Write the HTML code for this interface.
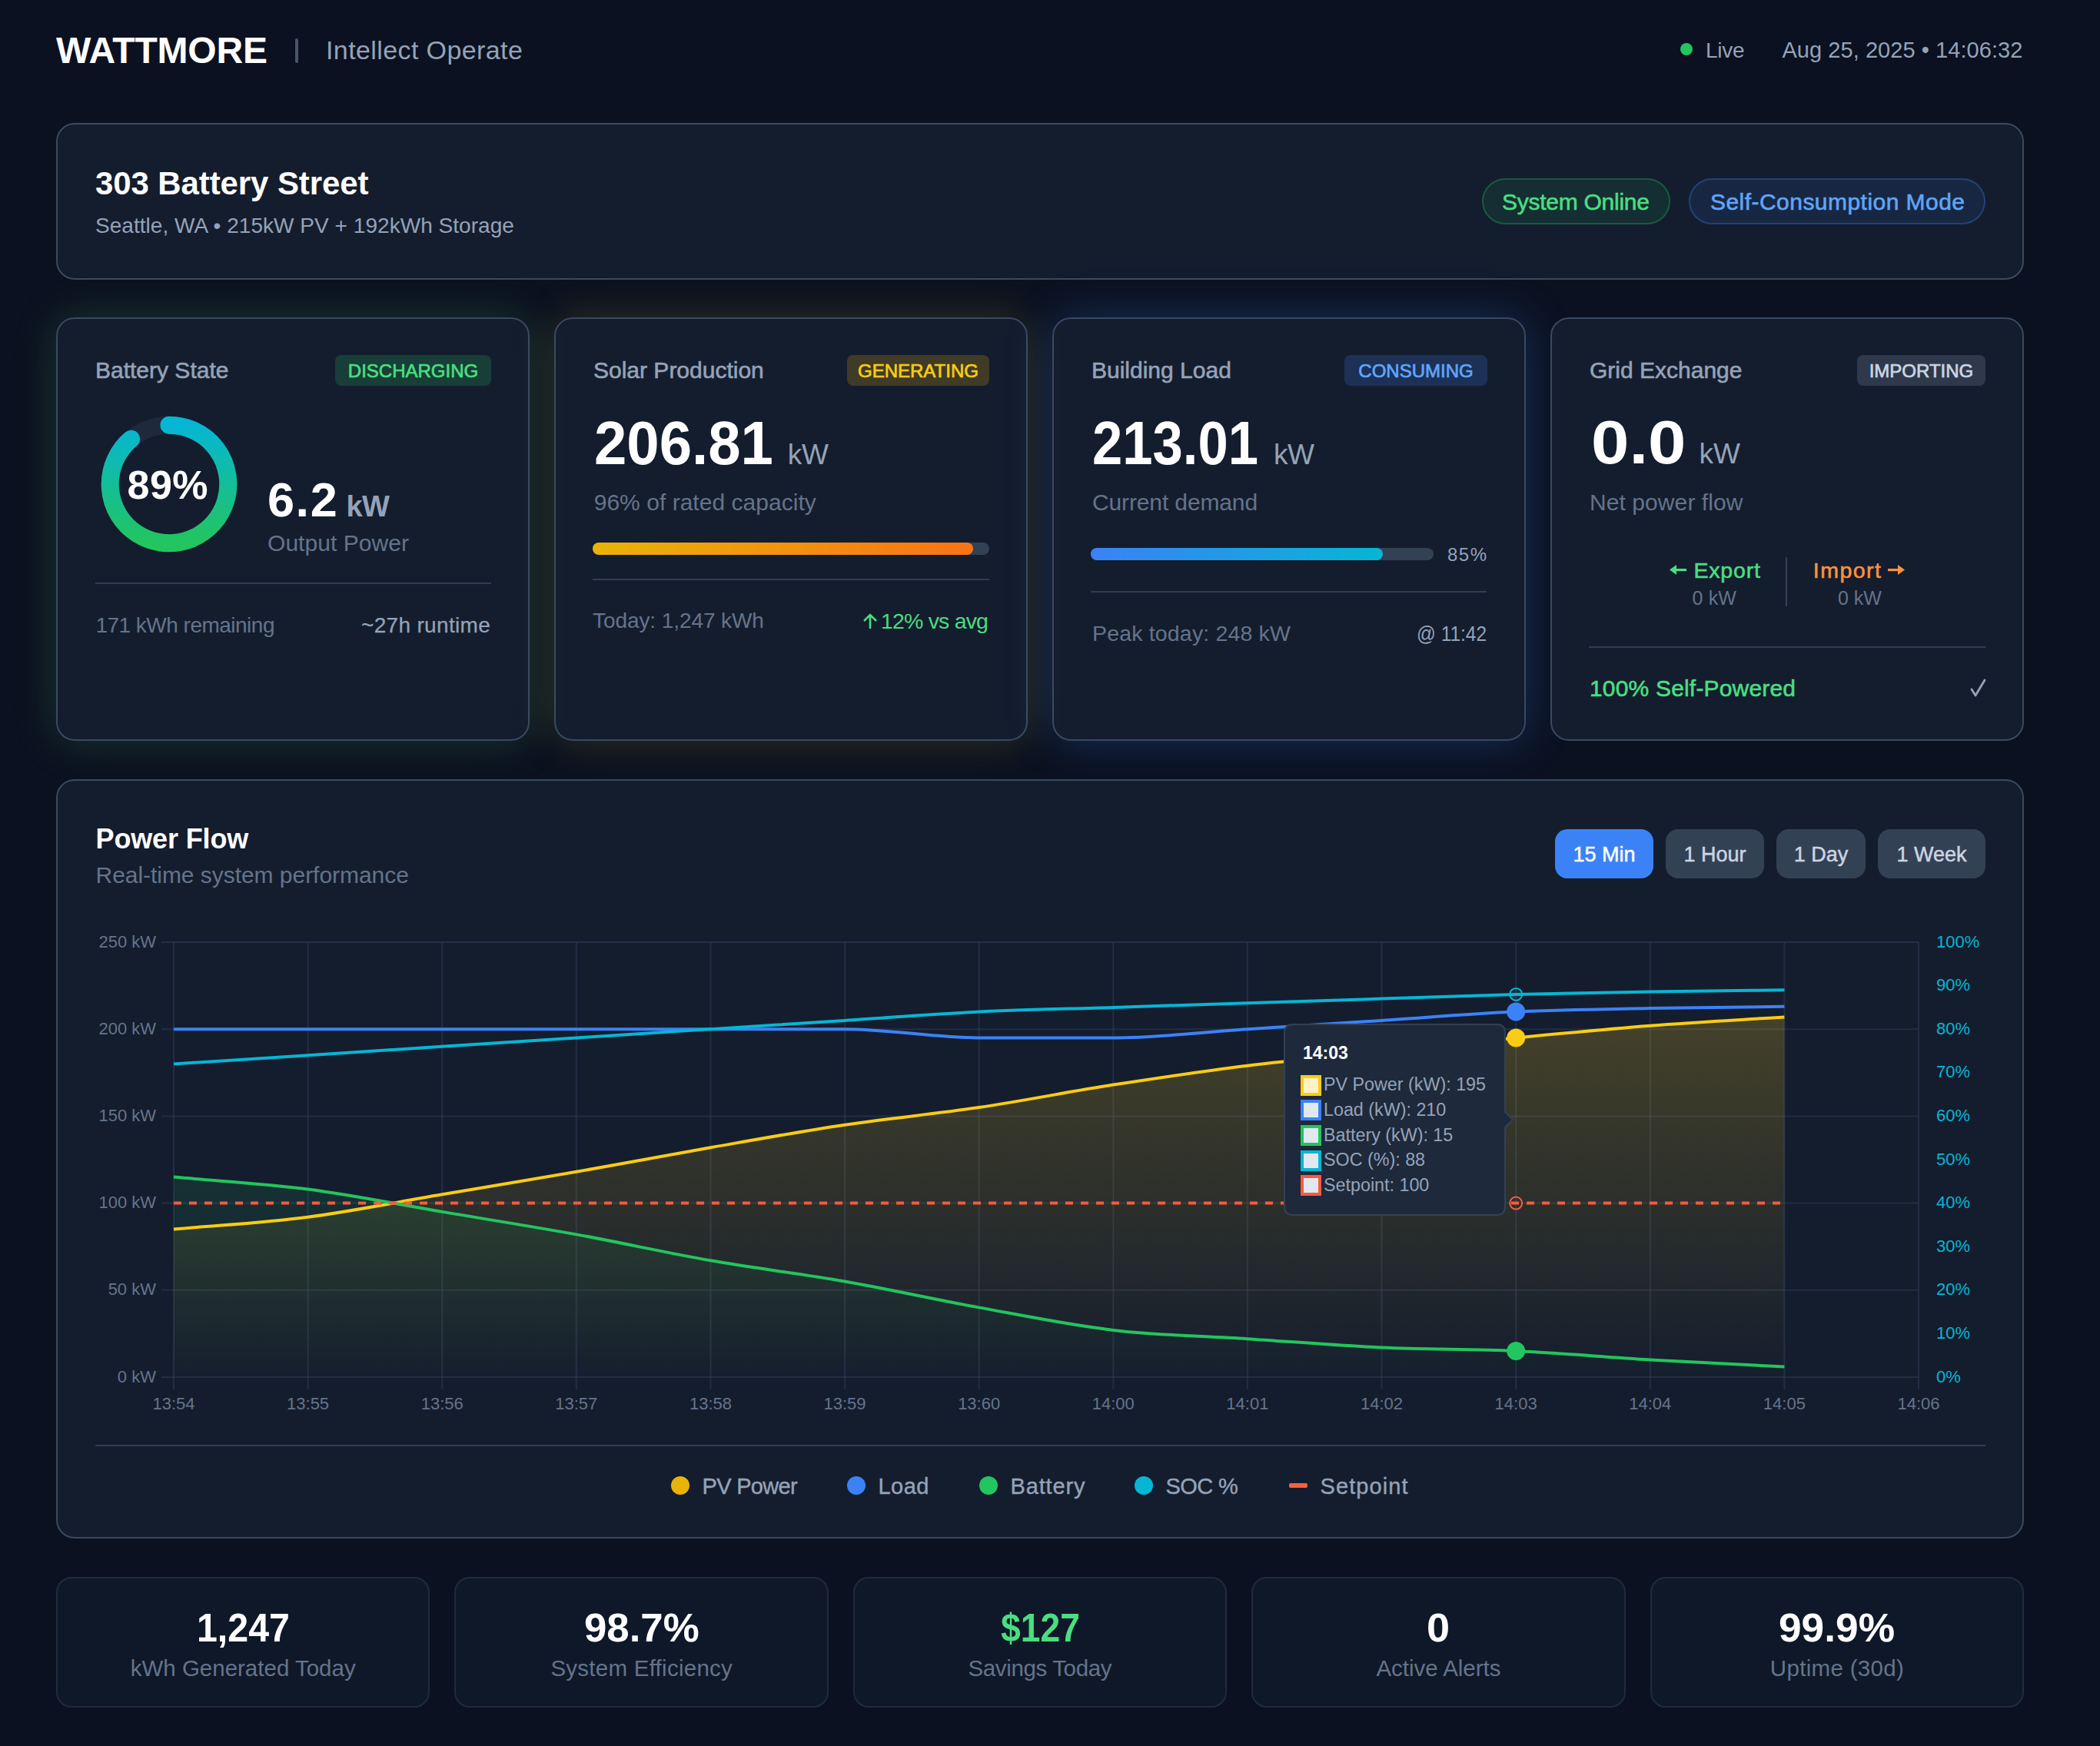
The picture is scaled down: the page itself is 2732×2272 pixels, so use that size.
<!DOCTYPE html>
<html><head><meta charset="utf-8"><title>Wattmore</title>
<style>
html,body{margin:0;padding:0;}
body{width:2732px;height:2272px;overflow:hidden;position:relative;background:#0b1120;font-family:"Liberation Sans",sans-serif;}
.t{position:absolute;white-space:nowrap;}
.b{position:absolute;}
</style></head><body>
<div class="t" style="left:73.00px;top:41.77px;font-size:48px;line-height:48px;color:#ffffff;font-weight:700;letter-spacing:-0.21px;">WATTMORE</div>
<div class="b" style="left:384px;top:50px;width:4px;height:32px;background:#475569;border-radius:2px"></div>
<div class="t" style="left:424.00px;top:48.22px;font-size:34px;line-height:34px;color:#94a3b8;letter-spacing:0.40px;">Intellect Operate</div>
<div class="b" style="left:2186px;top:56px;width:16px;height:16px;background:#22c55e;border-radius:50%"></div>
<div class="t" style="left:2219.00px;top:51.50px;font-size:28px;line-height:28px;color:#94a3b8;letter-spacing:-0.29px;">Live</div>
<div class="t" style="left:2318.40px;top:50.65px;font-size:29px;line-height:29px;color:#94a3b8;letter-spacing:0.06px;">Aug 25, 2025 • 14:06:32</div>
<div class="b" style="left:73px;top:160px;width:2560px;height:204px;background:rgba(30,41,59,0.5);border:2px solid #3a4960;border-radius:24px;box-sizing:border-box"></div>
<div class="t" style="left:124.00px;top:218.45px;font-size:42px;line-height:42px;color:#ffffff;font-weight:700;letter-spacing:-0.10px;">303 Battery Street</div>
<div class="t" style="left:124.00px;top:280.30px;font-size:28px;line-height:28px;color:#94a3b8;letter-spacing:0.04px;">Seattle, WA • 215kW PV + 192kWh Storage</div>
<div class="b" style="left:1928px;top:232px;width:245px;height:60px;background:rgba(34,197,94,0.1);border:2px solid rgba(34,197,94,0.3);border-radius:30px;box-sizing:border-box"></div>
<div class="t" style="left:1954.00px;top:247.80px;font-size:30px;line-height:30px;color:#4ade80;letter-spacing:-0.26px;-webkit-text-stroke:0.6px #4ade80;">System Online</div>
<div class="b" style="left:2197px;top:232px;width:386px;height:60px;background:rgba(59,130,246,0.1);border:2px solid rgba(59,130,246,0.3);border-radius:30px;box-sizing:border-box"></div>
<div class="t" style="left:2225.00px;top:247.80px;font-size:30px;line-height:30px;color:#60a5fa;letter-spacing:0.46px;-webkit-text-stroke:0.6px #60a5fa;">Self-Consumption Mode</div>
<div class="b" style="left:73px;top:413px;width:616px;height:551px;background:rgba(30,41,59,0.5);border:2px solid #3a4960;border-radius:24px;box-sizing:border-box;box-shadow:0 0 56px rgba(80,190,110,0.22)"></div>
<div class="b" style="left:721px;top:413px;width:616px;height:551px;background:rgba(30,41,59,0.5);border:2px solid #3a4960;border-radius:24px;box-sizing:border-box;box-shadow:0 0 56px rgba(200,185,50,0.2)"></div>
<div class="b" style="left:1369px;top:413px;width:616px;height:551px;background:rgba(30,41,59,0.5);border:2px solid #3a4960;border-radius:24px;box-sizing:border-box;box-shadow:0 0 60px rgba(59,130,246,0.26)"></div>
<div class="b" style="left:2017px;top:413px;width:616px;height:551px;background:rgba(30,41,59,0.5);border:2px solid #3a4960;border-radius:24px;box-sizing:border-box;box-shadow:none"></div>
<div class="t" style="left:124.00px;top:467.11px;font-size:30px;line-height:30px;color:#94a3b8;-webkit-text-stroke:0.6px #94a3b8;">Battery State</div>
<div class="b" style="left:436px;top:462px;width:203px;height:40px;background:rgba(34,197,94,0.2);border-radius:8px"></div>
<div class="t" style="left:452.84px;top:471.08px;font-size:24px;line-height:24px;color:#4ade80;-webkit-text-stroke:0.7px #4ade80;">DISCHARGING</div>
<div class="t" style="left:772.00px;top:467.11px;font-size:30px;line-height:30px;color:#94a3b8;-webkit-text-stroke:0.6px #94a3b8;">Solar Production</div>
<div class="b" style="left:1102px;top:462px;width:185px;height:40px;background:rgba(234,179,8,0.2);border-radius:8px"></div>
<div class="t" style="left:1116.02px;top:471.08px;font-size:24px;line-height:24px;color:#facc15;-webkit-text-stroke:0.7px #facc15;">GENERATING</div>
<div class="t" style="left:1420.00px;top:467.11px;font-size:30px;line-height:30px;color:#94a3b8;-webkit-text-stroke:0.6px #94a3b8;">Building Load</div>
<div class="b" style="left:1749px;top:462px;width:186px;height:40px;background:rgba(59,130,246,0.2);border-radius:8px"></div>
<div class="t" style="left:1767.36px;top:471.08px;font-size:24px;line-height:24px;color:#60a5fa;-webkit-text-stroke:0.7px #60a5fa;">CONSUMING</div>
<div class="t" style="left:2068.00px;top:467.11px;font-size:30px;line-height:30px;color:#94a3b8;-webkit-text-stroke:0.6px #94a3b8;">Grid Exchange</div>
<div class="b" style="left:2416px;top:462px;width:167px;height:40px;background:rgba(71,85,105,0.5);border-radius:8px"></div>
<div class="t" style="left:2431.70px;top:471.08px;font-size:24px;line-height:24px;color:#cbd5e1;-webkit-text-stroke:0.7px #cbd5e1;">IMPORTING</div>
<svg class="b" style="left:124px;top:534px" width="192" height="192" viewBox="0 0 100 100">
<defs><linearGradient id="dg" x1="0" y1="0" x2="0" y2="1"><stop offset="0" stop-color="#06b6d4"/><stop offset="1" stop-color="#22c55e"/></linearGradient></defs>
<circle cx="50" cy="50" r="40" fill="none" stroke="#1e293b" stroke-width="12"/>
<path d="M50,10 A40,40 0 1 1 24.29,19.36" fill="none" stroke="url(#dg)" stroke-width="12" stroke-linecap="round"/>
</svg>
<div class="t" style="left:165.50px;top:604.98px;font-size:52px;line-height:52px;color:#ffffff;font-weight:700;letter-spacing:0.50px;">89%</div>
<div class="t" style="left:348.00px;top:618.67px;font-size:63px;line-height:63px;color:#ffffff;font-weight:700;letter-spacing:1.56px;">6.2</div>
<div class="t" style="left:450.50px;top:639.83px;font-size:38px;line-height:38px;color:#94a3b8;font-weight:700;letter-spacing:-0.70px;">kW</div>
<div class="t" style="left:348.00px;top:691.61px;font-size:30px;line-height:30px;color:#64748b;letter-spacing:0.05px;">Output Power</div>
<div class="b" style="left:124px;top:758px;width:515px;height:2px;background:rgba(51,65,85,0.9)"></div>
<div class="t" style="left:124.40px;top:799.60px;font-size:28px;line-height:28px;color:#64748b;letter-spacing:-0.51px;">171 kWh remaining</div>
<div class="t" style="left:470.00px;top:799.60px;font-size:28px;line-height:28px;color:#94a3b8;letter-spacing:0.32px;-webkit-text-stroke:0.25px #94a3b8;">~27h runtime</div>
<div class="t" style="left:772.70px;top:536.73px;font-size:79px;line-height:79px;color:#ffffff;font-weight:700;transform:scaleX(0.9638);transform-origin:0.00px 0;">206.81</div>
<div class="t" style="left:1024.70px;top:572.68px;font-size:37px;line-height:37px;color:#94a3b8;letter-spacing:-0.16px;">kW</div>
<div class="t" style="left:772.70px;top:638.61px;font-size:30px;line-height:30px;color:#64748b;letter-spacing:0.03px;">96% of rated capacity</div>
<div class="b" style="left:771px;top:705.5px;width:515.5px;height:16.0px;background:#334155;border-radius:8px"></div>
<div class="b" style="left:771px;top:705.5px;width:495px;height:16.0px;background:linear-gradient(90deg,#eab308,#f97316);border-radius:8px"></div>
<div class="b" style="left:771px;top:753px;width:515.5px;height:2px;background:rgba(51,65,85,0.9)"></div>
<div class="t" style="left:771.00px;top:794.30px;font-size:28px;line-height:28px;color:#64748b;letter-spacing:-0.08px;">Today: 1,247 kWh</div>
<div class="t" style="left:1146.00px;top:793.87px;font-size:28.5px;line-height:28.5px;color:#4ade80;letter-spacing:-0.82px;">12% vs avg</div>
<svg class="b" style="left:1120px;top:796px" width="24" height="26"><path d="M12,4 V22 M4,12 L12,4 L20,12" fill="none" stroke="#4ade80" stroke-width="2.6" stroke-linejoin="miter"/></svg>
<div class="t" style="left:1421.00px;top:536.73px;font-size:79px;line-height:79px;color:#ffffff;font-weight:700;transform:scaleX(0.8935);transform-origin:0.00px 0;">213.01</div>
<div class="t" style="left:1657.00px;top:572.68px;font-size:37px;line-height:37px;color:#94a3b8;letter-spacing:-0.46px;">kW</div>
<div class="t" style="left:1421.00px;top:638.61px;font-size:30px;line-height:30px;color:#64748b;letter-spacing:-0.13px;">Current demand</div>
<div class="b" style="left:1419px;top:712.7px;width:446px;height:16.0px;background:#334155;border-radius:8px"></div>
<div class="b" style="left:1419px;top:712.7px;width:380px;height:16.0px;background:linear-gradient(90deg,#3b82f6,#06b6d4);border-radius:8px"></div>
<div class="t" style="left:1883.00px;top:710.18px;font-size:24px;line-height:24px;color:#94a3b8;letter-spacing:1.50px;">85%</div>
<div class="b" style="left:1419px;top:768.5px;width:515px;height:2.0px;background:rgba(51,65,85,0.9)"></div>
<div class="t" style="left:1421.00px;top:809.87px;font-size:28.5px;line-height:28.5px;color:#64748b;letter-spacing:0.17px;">Peak today: 248 kW</div>
<div class="t" style="left:1843.00px;top:809.87px;font-size:28.5px;line-height:28.5px;color:#94a3b8;transform:scaleX(0.8583);transform-origin:0.00px 0;">@ 11:42</div>
<div class="t" style="left:2069.60px;top:536.43px;font-size:79px;line-height:79px;color:#ffffff;font-weight:700;transform:scaleX(1.1238);transform-origin:0.00px 0;">0.0</div>
<div class="t" style="left:2210.60px;top:571.68px;font-size:37px;line-height:37px;color:#94a3b8;letter-spacing:-0.06px;">kW</div>
<div class="t" style="left:2068.00px;top:639.31px;font-size:30px;line-height:30px;color:#64748b;letter-spacing:0.08px;">Net power flow</div>
<div class="t" style="left:2203.40px;top:727.67px;font-size:28.5px;line-height:28.5px;color:#4ade80;letter-spacing:0.85px;-webkit-text-stroke:0.6px #4ade80;">Export</div>
<svg class="b" style="left:2168px;top:731px" width="30" height="22"><path d="M4,10.5 L13,4 L13,17 Z" fill="#4ade80"/><rect x="11" y="9" width="15" height="3.2" fill="#4ade80"/></svg>
<div class="t" style="left:2201.60px;top:765.64px;font-size:25px;line-height:25px;color:#64748b;letter-spacing:0.13px;">0 kW</div>
<div class="b" style="left:2323px;top:725px;width:2px;height:64px;background:#334155"></div>
<div class="t" style="left:2358.80px;top:727.67px;font-size:28.5px;line-height:28.5px;color:#fb923c;letter-spacing:1.48px;-webkit-text-stroke:0.6px #fb923c;">Import</div>
<svg class="b" style="left:2452px;top:731px" width="30" height="22"><path d="M26,10.5 L17,4 L17,17 Z" fill="#fb923c"/><rect x="4" y="9" width="15" height="3.2" fill="#fb923c"/></svg>
<div class="t" style="left:2391.00px;top:765.64px;font-size:25px;line-height:25px;color:#64748b;">0 kW</div>
<div class="b" style="left:2067px;top:840.5px;width:516px;height:2.0px;background:rgba(51,65,85,0.9)"></div>
<div class="t" style="left:2068.00px;top:880.61px;font-size:30px;line-height:30px;color:#4ade80;letter-spacing:0.18px;-webkit-text-stroke:0.6px #4ade80;">100% Self-Powered</div>
<svg class="b" style="left:2560px;top:880px" width="26" height="30"><path d="M5,17 L10,25 L22,5" fill="none" stroke="#94a3b8" stroke-width="2.8" stroke-linecap="round" stroke-linejoin="round"/></svg>
<div class="b" style="left:73px;top:1014px;width:2560px;height:988px;background:rgba(30,41,59,0.5);border:2px solid #3a4960;border-radius:24px;box-sizing:border-box"></div>
<div class="t" style="left:124.50px;top:1074.33px;font-size:36px;line-height:36px;color:#ffffff;font-weight:700;letter-spacing:-0.13px;">Power Flow</div>
<div class="t" style="left:124.50px;top:1124.01px;font-size:30px;line-height:30px;color:#64748b;letter-spacing:-0.04px;">Real-time system performance</div>
<div class="b" style="left:2023px;top:1079px;width:128px;height:64px;background:#3b82f6;border-radius:16px"></div>
<div class="t" style="left:2046.50px;top:1099.14px;font-size:27px;line-height:27px;color:#ffffff;-webkit-text-stroke:0.5px #ffffff;">15 Min</div>
<div class="b" style="left:2167px;top:1079px;width:128px;height:64px;background:#334155;border-radius:16px"></div>
<div class="t" style="left:2190.50px;top:1099.14px;font-size:27px;line-height:27px;color:#cbd5e1;-webkit-text-stroke:0.5px #cbd5e1;">1 Hour</div>
<div class="b" style="left:2311px;top:1079px;width:116px;height:64px;background:#334155;border-radius:16px"></div>
<div class="t" style="left:2333.76px;top:1099.14px;font-size:27px;line-height:27px;color:#cbd5e1;-webkit-text-stroke:0.5px #cbd5e1;">1 Day</div>
<div class="b" style="left:2443px;top:1079px;width:140px;height:64px;background:#334155;border-radius:16px"></div>
<div class="t" style="left:2467.44px;top:1099.14px;font-size:27px;line-height:27px;color:#cbd5e1;-webkit-text-stroke:0.5px #cbd5e1;">1 Week</div>
<svg class="b" style="left:0;top:0" width="2732" height="2272" viewBox="0 0 2732 2272">
<defs><linearGradient id="gy" gradientUnits="userSpaceOnUse" x1="0" y1="1226" x2="0" y2="1800"><stop offset="0" stop-color="rgba(250,204,21,0.25)"/><stop offset="1" stop-color="rgba(250,204,21,0)"/></linearGradient>
<linearGradient id="gg" gradientUnits="userSpaceOnUse" x1="0" y1="1226" x2="0" y2="1800"><stop offset="0" stop-color="rgba(34,197,94,0.25)"/><stop offset="1" stop-color="rgba(34,197,94,0)"/></linearGradient></defs>
<line x1="210" y1="1792.0" x2="2496" y2="1792.0" stroke="rgba(51,65,95,0.48)" stroke-width="2"/>
<line x1="210" y1="1678.8" x2="2496" y2="1678.8" stroke="rgba(51,65,95,0.48)" stroke-width="2"/>
<line x1="210" y1="1565.6" x2="2496" y2="1565.6" stroke="rgba(51,65,95,0.48)" stroke-width="2"/>
<line x1="210" y1="1452.4" x2="2496" y2="1452.4" stroke="rgba(51,65,95,0.48)" stroke-width="2"/>
<line x1="210" y1="1339.2" x2="2496" y2="1339.2" stroke="rgba(51,65,95,0.48)" stroke-width="2"/>
<line x1="210" y1="1226.0" x2="2496" y2="1226.0" stroke="rgba(51,65,95,0.48)" stroke-width="2"/>
<line x1="226.0" y1="1226" x2="226.0" y2="1808" stroke="rgba(51,65,95,0.48)" stroke-width="2"/>
<line x1="400.6" y1="1226" x2="400.6" y2="1808" stroke="rgba(51,65,95,0.48)" stroke-width="2"/>
<line x1="575.2" y1="1226" x2="575.2" y2="1808" stroke="rgba(51,65,95,0.48)" stroke-width="2"/>
<line x1="749.8" y1="1226" x2="749.8" y2="1808" stroke="rgba(51,65,95,0.48)" stroke-width="2"/>
<line x1="924.5" y1="1226" x2="924.5" y2="1808" stroke="rgba(51,65,95,0.48)" stroke-width="2"/>
<line x1="1099.1" y1="1226" x2="1099.1" y2="1808" stroke="rgba(51,65,95,0.48)" stroke-width="2"/>
<line x1="1273.7" y1="1226" x2="1273.7" y2="1808" stroke="rgba(51,65,95,0.48)" stroke-width="2"/>
<line x1="1448.3" y1="1226" x2="1448.3" y2="1808" stroke="rgba(51,65,95,0.48)" stroke-width="2"/>
<line x1="1622.9" y1="1226" x2="1622.9" y2="1808" stroke="rgba(51,65,95,0.48)" stroke-width="2"/>
<line x1="1797.5" y1="1226" x2="1797.5" y2="1808" stroke="rgba(51,65,95,0.48)" stroke-width="2"/>
<line x1="1972.2" y1="1226" x2="1972.2" y2="1808" stroke="rgba(51,65,95,0.48)" stroke-width="2"/>
<line x1="2146.8" y1="1226" x2="2146.8" y2="1808" stroke="rgba(51,65,95,0.48)" stroke-width="2"/>
<line x1="2321.4" y1="1226" x2="2321.4" y2="1808" stroke="rgba(51,65,95,0.48)" stroke-width="2"/>
<line x1="2496.0" y1="1226" x2="2496.0" y2="1808" stroke="rgba(51,65,95,0.48)" stroke-width="2"/>
<path d="M226.0,1599.6 C284.2,1594.3 342.4,1591.3 400.6,1583.7 C458.8,1576.2 517.0,1564.1 575.2,1554.3 C633.4,1544.5 691.6,1535.0 749.8,1524.8 C808.1,1514.7 866.3,1503.3 924.5,1493.2 C982.7,1483.0 1040.9,1472.4 1099.1,1463.7 C1157.3,1455.0 1215.5,1449.8 1273.7,1441.1 C1331.9,1432.4 1390.1,1420.7 1448.3,1411.6 C1506.5,1402.6 1564.7,1393.9 1622.9,1386.7 C1681.1,1379.6 1739.3,1374.7 1797.5,1368.6 C1855.7,1362.6 1913.9,1356.2 1972.2,1350.5 C2030.4,1344.9 2088.6,1339.2 2146.8,1334.7 C2205.0,1330.1 2263.2,1327.1 2321.4,1323.4 L2321.4,1792 L226.0,1792 Z" fill="url(#gy)"/>
<path d="M226.0,1531.6 C284.2,1536.9 342.4,1539.9 400.6,1547.5 C458.8,1555.0 517.0,1567.1 575.2,1576.9 C633.4,1586.7 691.6,1595.8 749.8,1606.4 C808.1,1616.9 866.3,1630.1 924.5,1640.3 C982.7,1650.5 1040.9,1657.3 1099.1,1667.5 C1157.3,1677.7 1215.5,1690.9 1273.7,1701.4 C1331.9,1712.0 1390.1,1724.1 1448.3,1730.9 C1506.5,1737.7 1564.7,1738.4 1622.9,1742.2 C1681.1,1746.0 1739.3,1750.9 1797.5,1753.5 C1855.7,1756.2 1913.9,1755.4 1972.2,1758.0 C2030.4,1760.7 2088.6,1766.0 2146.8,1769.4 C2205.0,1772.8 2263.2,1775.4 2321.4,1778.4 L2321.4,1792 L226.0,1792 Z" fill="url(#gg)"/>
<path d="M226.0,1599.6 C284.2,1594.3 342.4,1591.3 400.6,1583.7 C458.8,1576.2 517.0,1564.1 575.2,1554.3 C633.4,1544.5 691.6,1535.0 749.8,1524.8 C808.1,1514.7 866.3,1503.3 924.5,1493.2 C982.7,1483.0 1040.9,1472.4 1099.1,1463.7 C1157.3,1455.0 1215.5,1449.8 1273.7,1441.1 C1331.9,1432.4 1390.1,1420.7 1448.3,1411.6 C1506.5,1402.6 1564.7,1393.9 1622.9,1386.7 C1681.1,1379.6 1739.3,1374.7 1797.5,1368.6 C1855.7,1362.6 1913.9,1356.2 1972.2,1350.5 C2030.4,1344.9 2088.6,1339.2 2146.8,1334.7 C2205.0,1330.1 2263.2,1327.1 2321.4,1323.4" fill="none" stroke="#facc15" stroke-width="4"/>
<path d="M226.0,1339.2 C284.2,1339.2 342.4,1339.2 400.6,1339.2 C458.8,1339.2 517.0,1339.2 575.2,1339.2 C633.4,1339.2 691.6,1339.2 749.8,1339.2 C808.1,1339.2 866.3,1339.2 924.5,1339.2 C982.7,1339.2 1040.9,1339.2 1099.1,1339.2 C1157.3,1339.2 1215.5,1350.5 1273.7,1350.5 C1331.9,1350.5 1390.1,1350.5 1448.3,1350.5 C1506.5,1350.5 1564.7,1343.0 1622.9,1339.2 C1681.1,1335.4 1739.3,1331.7 1797.5,1327.9 C1855.7,1324.1 1913.9,1319.2 1972.2,1316.6 C2030.4,1313.9 2088.6,1313.2 2146.8,1312.0 C2205.0,1310.9 2263.2,1310.5 2321.4,1309.8" fill="none" stroke="#3b82f6" stroke-width="4"/>
<path d="M226.0,1531.6 C284.2,1536.9 342.4,1539.9 400.6,1547.5 C458.8,1555.0 517.0,1567.1 575.2,1576.9 C633.4,1586.7 691.6,1595.8 749.8,1606.4 C808.1,1616.9 866.3,1630.1 924.5,1640.3 C982.7,1650.5 1040.9,1657.3 1099.1,1667.5 C1157.3,1677.7 1215.5,1690.9 1273.7,1701.4 C1331.9,1712.0 1390.1,1724.1 1448.3,1730.9 C1506.5,1737.7 1564.7,1738.4 1622.9,1742.2 C1681.1,1746.0 1739.3,1750.9 1797.5,1753.5 C1855.7,1756.2 1913.9,1755.4 1972.2,1758.0 C2030.4,1760.7 2088.6,1766.0 2146.8,1769.4 C2205.0,1772.8 2263.2,1775.4 2321.4,1778.4" fill="none" stroke="#22c55e" stroke-width="4"/>
<path d="M226.0,1384.5 C284.2,1380.7 342.4,1376.9 400.6,1373.2 C458.8,1369.4 517.0,1365.6 575.2,1361.8 C633.4,1358.1 691.6,1354.3 749.8,1350.5 C808.1,1346.7 866.3,1343.0 924.5,1339.2 C982.7,1335.4 1040.9,1331.7 1099.1,1327.9 C1157.3,1324.1 1215.5,1319.4 1273.7,1316.6 C1331.9,1313.7 1390.1,1312.8 1448.3,1310.9 C1506.5,1309.0 1564.7,1307.1 1622.9,1305.2 C1681.1,1303.4 1739.3,1301.5 1797.5,1299.6 C1855.7,1297.7 1913.9,1295.4 1972.2,1293.9 C2030.4,1292.4 2088.6,1291.5 2146.8,1290.5 C2205.0,1289.6 2263.2,1289.0 2321.4,1288.3" fill="none" stroke="#06b6d4" stroke-width="4"/>
<line x1="226" y1="1565.6" x2="2321.4" y2="1565.6" stroke="#f75a3f" stroke-width="4" stroke-dasharray="10 10"/>
<circle cx="1972.2" cy="1293.9" r="8" fill="rgba(6,182,212,0.1)" stroke="#06b6d4" stroke-width="2"/>
<circle cx="1972.2" cy="1565.6" r="8" fill="none" stroke="#f75a3f" stroke-width="2"/>
<circle cx="1972.2" cy="1350.5" r="12" fill="#facc15"/>
<circle cx="1972.2" cy="1316.6" r="12" fill="#3b82f6"/>
<circle cx="1972.2" cy="1758.0" r="12" fill="#22c55e"/>
<path d="M1682,1333 H1947 Q1958,1333 1958,1344 V1447 L1968,1457 L1958,1467 V1570 Q1958,1581 1947,1581 H1682 Q1671,1581 1671,1570 V1344 Q1671,1333 1682,1333 Z" fill="#1e293b" stroke="#334155" stroke-width="2"/>
</svg>
<div class="t" style="left:152.84px;top:1780.68px;font-size:22px;line-height:22px;color:#64748b;font-family:'Liberation Sans'">0 kW</div>
<div class="t" style="left:140.63px;top:1667.48px;font-size:22px;line-height:22px;color:#64748b;font-family:'Liberation Sans'">50 kW</div>
<div class="t" style="left:128.42px;top:1554.28px;font-size:22px;line-height:22px;color:#64748b;font-family:'Liberation Sans'">100 kW</div>
<div class="t" style="left:128.42px;top:1441.08px;font-size:22px;line-height:22px;color:#64748b;font-family:'Liberation Sans'">150 kW</div>
<div class="t" style="left:128.42px;top:1327.88px;font-size:22px;line-height:22px;color:#64748b;font-family:'Liberation Sans'">200 kW</div>
<div class="t" style="left:128.42px;top:1214.68px;font-size:22px;line-height:22px;color:#64748b;font-family:'Liberation Sans'">250 kW</div>
<div class="t" style="left:2519.00px;top:1780.68px;font-size:22px;line-height:22px;color:#06b6d4;">0%</div>
<div class="t" style="left:2519.00px;top:1724.08px;font-size:22px;line-height:22px;color:#06b6d4;">10%</div>
<div class="t" style="left:2519.00px;top:1667.48px;font-size:22px;line-height:22px;color:#06b6d4;">20%</div>
<div class="t" style="left:2519.00px;top:1610.88px;font-size:22px;line-height:22px;color:#06b6d4;">30%</div>
<div class="t" style="left:2519.00px;top:1554.28px;font-size:22px;line-height:22px;color:#06b6d4;">40%</div>
<div class="t" style="left:2519.00px;top:1497.68px;font-size:22px;line-height:22px;color:#06b6d4;">50%</div>
<div class="t" style="left:2519.00px;top:1441.08px;font-size:22px;line-height:22px;color:#06b6d4;">60%</div>
<div class="t" style="left:2519.00px;top:1384.48px;font-size:22px;line-height:22px;color:#06b6d4;">70%</div>
<div class="t" style="left:2519.00px;top:1327.88px;font-size:22px;line-height:22px;color:#06b6d4;">80%</div>
<div class="t" style="left:2519.00px;top:1271.28px;font-size:22px;line-height:22px;color:#06b6d4;">90%</div>
<div class="t" style="left:2519.00px;top:1214.68px;font-size:22px;line-height:22px;color:#06b6d4;">100%</div>
<div class="t" style="left:198.44px;top:1816.38px;font-size:22px;line-height:22px;color:#64748b;">13:54</div>
<div class="t" style="left:373.06px;top:1816.38px;font-size:22px;line-height:22px;color:#64748b;">13:55</div>
<div class="t" style="left:547.68px;top:1816.38px;font-size:22px;line-height:22px;color:#64748b;">13:56</div>
<div class="t" style="left:722.29px;top:1816.38px;font-size:22px;line-height:22px;color:#64748b;">13:57</div>
<div class="t" style="left:896.91px;top:1816.38px;font-size:22px;line-height:22px;color:#64748b;">13:58</div>
<div class="t" style="left:1071.52px;top:1816.38px;font-size:22px;line-height:22px;color:#64748b;">13:59</div>
<div class="t" style="left:1246.14px;top:1816.38px;font-size:22px;line-height:22px;color:#64748b;">13:60</div>
<div class="t" style="left:1420.75px;top:1816.38px;font-size:22px;line-height:22px;color:#64748b;">14:00</div>
<div class="t" style="left:1595.37px;top:1816.38px;font-size:22px;line-height:22px;color:#64748b;">14:01</div>
<div class="t" style="left:1769.98px;top:1816.38px;font-size:22px;line-height:22px;color:#64748b;">14:02</div>
<div class="t" style="left:1944.60px;top:1816.38px;font-size:22px;line-height:22px;color:#64748b;">14:03</div>
<div class="t" style="left:2119.21px;top:1816.38px;font-size:22px;line-height:22px;color:#64748b;">14:04</div>
<div class="t" style="left:2293.83px;top:1816.38px;font-size:22px;line-height:22px;color:#64748b;">14:05</div>
<div class="t" style="left:2468.45px;top:1816.38px;font-size:22px;line-height:22px;color:#64748b;">14:06</div>
<div class="t" style="left:1695.00px;top:1359.23px;font-size:23px;line-height:23px;color:#ffffff;font-weight:700;">14:03</div>
<div class="b" style="left:1692px;top:1399px;width:27px;height:27px;background:#fef3c7;border:4px solid #facc15;box-sizing:border-box"></div>
<div class="t" style="left:1722.00px;top:1400.28px;font-size:23.3px;line-height:23.3px;color:#94a3b8;">PV Power (kW): 195</div>
<div class="b" style="left:1692px;top:1431px;width:27px;height:27px;background:#e2e8f0;border:4px solid #3b82f6;box-sizing:border-box"></div>
<div class="t" style="left:1722.00px;top:1432.93px;font-size:23.3px;line-height:23.3px;color:#94a3b8;">Load (kW): 210</div>
<div class="b" style="left:1692px;top:1464px;width:27px;height:27px;background:#e2e8f0;border:4px solid #22c55e;box-sizing:border-box"></div>
<div class="t" style="left:1722.00px;top:1465.58px;font-size:23.3px;line-height:23.3px;color:#94a3b8;">Battery (kW): 15</div>
<div class="b" style="left:1692px;top:1497px;width:27px;height:27px;background:#e2e8f0;border:4px solid #06b6d4;box-sizing:border-box"></div>
<div class="t" style="left:1722.00px;top:1498.23px;font-size:23.3px;line-height:23.3px;color:#94a3b8;">SOC (%): 88</div>
<div class="b" style="left:1692px;top:1529px;width:27px;height:27px;background:#e2e8f0;border:4px solid #f75a3f;box-sizing:border-box"></div>
<div class="t" style="left:1722.00px;top:1530.88px;font-size:23.3px;line-height:23.3px;color:#94a3b8;">Setpoint: 100</div>
<div class="b" style="left:124px;top:1880px;width:2459px;height:2px;background:rgba(51,65,85,0.9)"></div>
<div class="b" style="left:873px;top:1921px;width:24px;height:24px;background:#eab308;border-radius:50%"></div>
<div class="t" style="left:913.50px;top:1920.45px;font-size:29px;line-height:29px;color:#94a3b8;letter-spacing:-0.70px;-webkit-text-stroke:0.4px #94a3b8;">PV Power</div>
<div class="b" style="left:1102px;top:1921px;width:24px;height:24px;background:#3b82f6;border-radius:50%"></div>
<div class="t" style="left:1142.50px;top:1920.45px;font-size:29px;line-height:29px;color:#94a3b8;letter-spacing:0.49px;-webkit-text-stroke:0.4px #94a3b8;">Load</div>
<div class="b" style="left:1274px;top:1921px;width:24px;height:24px;background:#22c55e;border-radius:50%"></div>
<div class="t" style="left:1314.50px;top:1920.45px;font-size:29px;line-height:29px;color:#94a3b8;letter-spacing:0.85px;-webkit-text-stroke:0.4px #94a3b8;">Battery</div>
<div class="b" style="left:1476px;top:1921px;width:24px;height:24px;background:#06b6d4;border-radius:50%"></div>
<div class="t" style="left:1516.50px;top:1920.45px;font-size:29px;line-height:29px;color:#94a3b8;letter-spacing:-0.58px;-webkit-text-stroke:0.4px #94a3b8;">SOC %</div>
<div class="b" style="left:1677px;top:1930px;width:24px;height:6px;background:#f7603f;border-radius:2px"></div>
<div class="t" style="left:1717.50px;top:1920.45px;font-size:29px;line-height:29px;color:#94a3b8;letter-spacing:1.08px;-webkit-text-stroke:0.4px #94a3b8;">Setpoint</div>
<div class="b" style="left:73px;top:2052px;width:486px;height:170px;background:#0f1829;border:2px solid #202b3d;border-radius:20px;box-sizing:border-box"></div>
<div class="t" style="left:255.70px;top:2093.43px;font-size:51px;line-height:51px;color:#ffffff;font-weight:700;transform:scaleX(0.9471);transform-origin:0.00px 0;">1,247</div>
<div class="t" style="left:169.70px;top:2155.83px;font-size:29.5px;line-height:29.5px;color:#64748b;">kWh Generated Today</div>
<div class="b" style="left:591px;top:2052px;width:487px;height:170px;background:#0f1829;border:2px solid #202b3d;border-radius:20px;box-sizing:border-box"></div>
<div class="t" style="left:759.80px;top:2093.43px;font-size:51px;line-height:51px;color:#ffffff;font-weight:700;transform:scaleX(1.0347);transform-origin:0.00px 0;">98.7%</div>
<div class="t" style="left:716.40px;top:2155.83px;font-size:29.5px;line-height:29.5px;color:#64748b;letter-spacing:0.26px;">System Efficiency</div>
<div class="b" style="left:1110px;top:2052px;width:486px;height:170px;background:#0f1829;border:2px solid #202b3d;border-radius:20px;box-sizing:border-box"></div>
<div class="t" style="left:1301.50px;top:2093.43px;font-size:51px;line-height:51px;color:#4ade80;font-weight:700;transform:scaleX(0.9077);transform-origin:0.00px 0;">$127</div>
<div class="t" style="left:1259.50px;top:2155.83px;font-size:29.5px;line-height:29.5px;color:#64748b;letter-spacing:-0.36px;">Savings Today</div>
<div class="b" style="left:1628px;top:2052px;width:487px;height:170px;background:#0f1829;border:2px solid #202b3d;border-radius:20px;box-sizing:border-box"></div>
<div class="t" style="left:1856.40px;top:2093.43px;font-size:51px;line-height:51px;color:#ffffff;font-weight:700;transform:scaleX(1.0599);transform-origin:0.00px 0;">0</div>
<div class="t" style="left:1790.40px;top:2155.83px;font-size:29.5px;line-height:29.5px;color:#64748b;letter-spacing:-0.02px;">Active Alerts</div>
<div class="b" style="left:2147px;top:2052px;width:486px;height:170px;background:#0f1829;border:2px solid #202b3d;border-radius:20px;box-sizing:border-box"></div>
<div class="t" style="left:2314.30px;top:2093.43px;font-size:51px;line-height:51px;color:#ffffff;font-weight:700;transform:scaleX(1.0444);transform-origin:0.00px 0;">99.9%</div>
<div class="t" style="left:2302.80px;top:2155.83px;font-size:29.5px;line-height:29.5px;color:#64748b;letter-spacing:0.32px;">Uptime (30d)</div>
</body></html>
